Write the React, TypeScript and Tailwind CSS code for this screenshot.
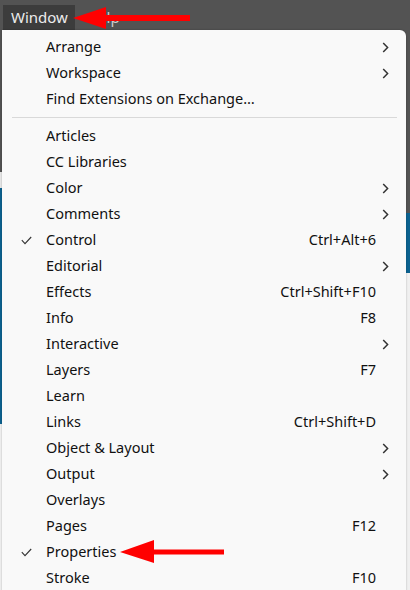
import React from 'react';

type Item = { label: string; shortcut?: string; sub?: boolean; checked?: boolean };

const topItems: Item[] = [
  { label: 'Arrange', sub: true },
  { label: 'Workspace', sub: true },
  { label: 'Find Extensions on Exchange…' },
];

const items: Item[] = [
  { label: 'Articles' },
  { label: 'CC Libraries' },
  { label: 'Color', sub: true },
  { label: 'Comments', sub: true },
  { label: 'Control', shortcut: 'Ctrl+Alt+6', checked: true },
  { label: 'Editorial', sub: true },
  { label: 'Effects', shortcut: 'Ctrl+Shift+F10' },
  { label: 'Info', shortcut: 'F8' },
  { label: 'Interactive', sub: true },
  { label: 'Layers', shortcut: 'F7' },
  { label: 'Learn' },
  { label: 'Links', shortcut: 'Ctrl+Shift+D' },
  { label: 'Object & Layout', sub: true },
  { label: 'Output', sub: true },
  { label: 'Overlays' },
  { label: 'Pages', shortcut: 'F12' },
  { label: 'Properties', checked: true },
  { label: 'Stroke', shortcut: 'F10' },
];

const Row: React.FC<{ item: Item }> = ({ item }) => (
  <div className="flex items-center h-[26px] text-[14.5px] text-[#111]">
    <div className="w-[44px] flex justify-center pl-[4px]">
      {item.checked && (
        <svg width="11" height="9" viewBox="0 0 11 9">
          <path d="M0.8 4.2 L4 7.6 L10.2 1" fill="none" stroke="#333" strokeWidth="1.1" />
        </svg>
      )}
    </div>
    <div className="flex-1">{item.label}</div>
    {item.shortcut && <div>{item.shortcut}</div>}
    <div className="w-[30px] flex justify-start pl-[6px]">
      {item.sub && (
        <svg width="7" height="11" viewBox="0 0 7 11">
          <path d="M1.2 1 L5.6 5.5 L1.2 10" fill="none" stroke="#333" strokeWidth="1.5" />
        </svg>
      )}
    </div>
  </div>
);

export default function App() {
  return (
    <div
      className="relative w-[410px] h-[590px] overflow-hidden bg-[#535353]"
      style={{ fontFamily: '"Segoe UI", "Noto Sans", "Open Sans", sans-serif' }}
    >
      {/* top menu bar */}
      <div className="h-[30px] flex items-end pl-[3px]">
        <div className="h-[25px] w-[72px] bg-[#3c3c3c] text-[#ececec] text-[15px] pl-[8px] leading-[24px]">
          Window
        </div>
        <div className="h-[25px] pl-[12px] text-[#cfcfcf] text-[15px] leading-[24px]">Help</div>
      </div>

      {/* underlying panel strips */}
      <div className="absolute left-0 top-[172px] w-[3px] h-[16px] bg-[#e8e8e8]" />
      <div className="absolute left-0 top-[188px] w-[3px] h-[236px] bg-[#0c6290]" />
      <div className="absolute left-0 top-[424px] w-[3px] h-[166px] bg-[#f0f0f0]" />
      <div className="absolute right-0 top-[213px] w-[4px] h-[60px] bg-[#0c6290]" />
      <div className="absolute right-0 top-[273px] w-[4px] h-[317px] bg-[#f0f0f0]" />

      {/* dropdown */}
      <div className="absolute left-[2px] top-[30px] w-[404px] h-[570px] bg-[#f9f9f9] rounded-tr-[6px] pt-[4px] shadow-[0_0_2px_rgba(0,0,0,0.3)]">
        {topItems.map(it => (
          <Row key={it.label} item={it} />
        ))}
        <div className="h-[11px] flex items-center pl-[10px] pr-[9px]">
          <div className="h-px w-full bg-[#d9d9d9]" />
        </div>
        {items.map(it => (
          <Row key={it.label} item={it} />
        ))}
      </div>

      {/* red arrows */}
      <svg className="absolute left-[72px] top-[6px]" width="120" height="24" viewBox="0 0 120 24">
        <path d="M1 12 L34 1 L34 9 L118 9 L118 15 L34 15 L34 23 Z" fill="#ff0000" />
      </svg>
      <svg className="absolute left-[119px] top-[539px]" width="107" height="25" viewBox="0 0 107 25">
        <path d="M1 13 L35 1 L35 10.5 L105 10.5 L105 15.5 L35 15.5 L35 24 Z" fill="#ff0000" />
      </svg>
    </div>
  );
}
